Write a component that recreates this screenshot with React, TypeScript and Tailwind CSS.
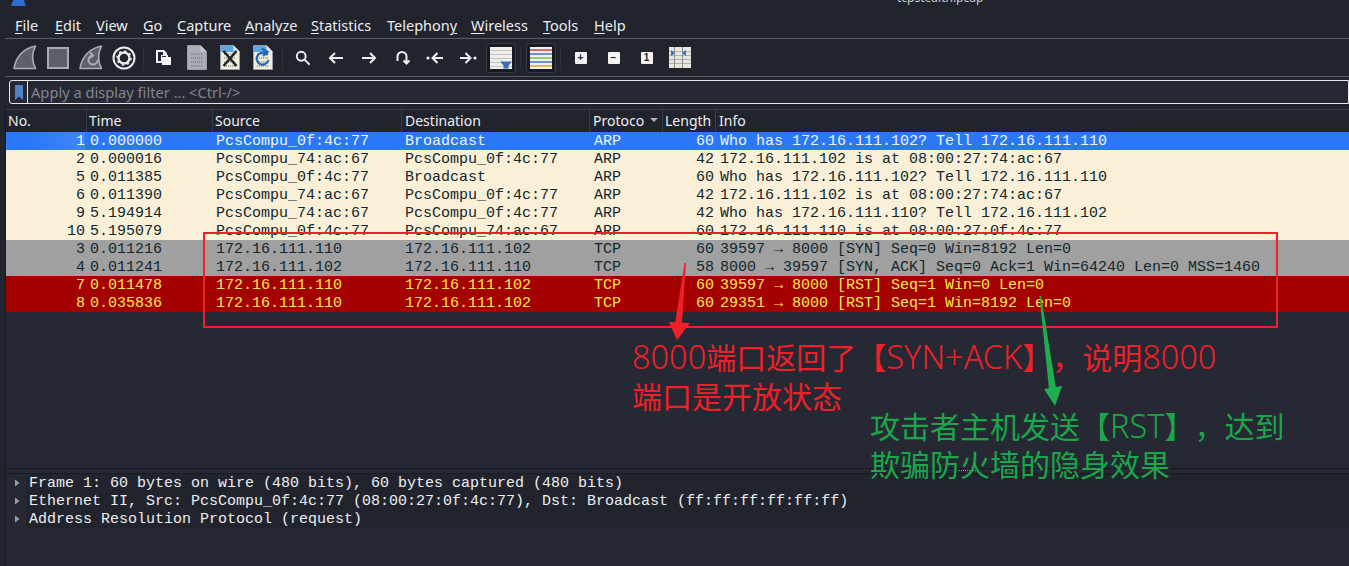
import { ReactNode } from "react";

const MONO = "font-['Liberation_Mono',monospace] text-[15px]";
const NOTE = "absolute text-[30px] font-['Noto_Sans_CJK_SC',sans-serif] whitespace-pre [text-spacing-trim:space-all]";

type Packet = { no: number; time: string; src: string; dst: string; proto: string; len: number; info: string; tone: string };

const ARP = "bg-[#faf0d7] text-[#12272e]";
const SYN = "bg-[#a0a0a0] text-[#12272e]";
const RST = "bg-[#a40000] text-[#fce94f]";

const packets: Packet[] = [
  { no: 1, time: "0.000000", src: "PcsCompu_0f:4c:77", dst: "Broadcast", proto: "ARP", len: 60, info: "Who has 172.16.111.102? Tell 172.16.111.110", tone: "bg-[#2a78f5] text-[#eef4ff]" },
  { no: 2, time: "0.000016", src: "PcsCompu_74:ac:67", dst: "PcsCompu_0f:4c:77", proto: "ARP", len: 42, info: "172.16.111.102 is at 08:00:27:74:ac:67", tone: ARP },
  { no: 5, time: "0.011385", src: "PcsCompu_0f:4c:77", dst: "Broadcast", proto: "ARP", len: 60, info: "Who has 172.16.111.102? Tell 172.16.111.110", tone: ARP },
  { no: 6, time: "0.011390", src: "PcsCompu_74:ac:67", dst: "PcsCompu_0f:4c:77", proto: "ARP", len: 42, info: "172.16.111.102 is at 08:00:27:74:ac:67", tone: ARP },
  { no: 9, time: "5.194914", src: "PcsCompu_74:ac:67", dst: "PcsCompu_0f:4c:77", proto: "ARP", len: 42, info: "Who has 172.16.111.110? Tell 172.16.111.102", tone: ARP },
  { no: 10, time: "5.195079", src: "PcsCompu_0f:4c:77", dst: "PcsCompu_74:ac:67", proto: "ARP", len: 60, info: "172.16.111.110 is at 08:00:27:0f:4c:77", tone: ARP },
  { no: 3, time: "0.011216", src: "172.16.111.110", dst: "172.16.111.102", proto: "TCP", len: 60, info: "39597 → 8000 [SYN] Seq=0 Win=8192 Len=0", tone: SYN },
  { no: 4, time: "0.011241", src: "172.16.111.102", dst: "172.16.111.110", proto: "TCP", len: 58, info: "8000 → 39597 [SYN, ACK] Seq=0 Ack=1 Win=64240 Len=0 MSS=1460", tone: SYN },
  { no: 7, time: "0.011478", src: "172.16.111.110", dst: "172.16.111.102", proto: "TCP", len: 60, info: "39597 → 8000 [RST] Seq=1 Win=0 Len=0", tone: RST },
  { no: 8, time: "0.035836", src: "172.16.111.110", dst: "172.16.111.102", proto: "TCP", len: 60, info: "29351 → 8000 [RST] Seq=1 Win=8192 Len=0", tone: RST },
];

const details = [
  "Frame 1: 60 bytes on wire (480 bits), 60 bytes captured (480 bits)",
  "Ethernet II, Src: PcsCompu_0f:4c:77 (08:00:27:0f:4c:77), Dst: Broadcast (ff:ff:ff:ff:ff:ff)",
  "Address Resolution Protocol (request)",
];

const menu: { pre: string; key: string; post: string; w: string }[] = [
  { pre: "", key: "F", post: "ile", w: "w-[40px]" },
  { pre: "", key: "E", post: "dit", w: "w-[41px]" },
  { pre: "", key: "V", post: "iew", w: "w-[47px]" },
  { pre: "", key: "G", post: "o", w: "w-[34px]" },
  { pre: "", key: "C", post: "apture", w: "w-[68px]" },
  { pre: "", key: "A", post: "nalyze", w: "w-[66px]" },
  { pre: "", key: "S", post: "tatistics", w: "w-[76px]" },
  { pre: "Telephon", key: "y", post: "", w: "w-[84px]" },
  { pre: "", key: "W", post: "ireless", w: "w-[72px]" },
  { pre: "", key: "T", post: "ools", w: "w-[51px]" },
  { pre: "", key: "H", post: "elp", w: "w-[40px]" },
];

const Shark = ({ reload }: { reload?: boolean }) => (
  <svg width="24" height="25" viewBox="0 0 24 25">
    <path d="M1 23.5 C3 12 9 4 22.5 1 C19 8 18.5 16 22.5 23.5 Z" fill="#5d6068" stroke="#a8abb3" strokeWidth="1.6" strokeLinejoin="round" />
    {reload && <path d="M18.5 15 a4.5 4.5 0 1 1 -4.5 -4.5 M11 7.5l3 3-3 2.5" fill="none" stroke="#a8abb3" strokeWidth="2" />}
  </svg>
);

const Stop = () => <div className="w-[22px] h-[22px] bg-[#5d6068] border-2 border-[#a8abb3]" />;

const Gear = () => (
  <svg width="24" height="24" viewBox="0 0 24 24">
    <circle cx="12" cy="12" r="10.5" fill="none" stroke="#ececec" strokeWidth="2" />
    <circle cx="12" cy="12" r="5.5" fill="none" stroke="#ececec" strokeWidth="2.4" />
    <circle cx="12" cy="12" r="7" fill="none" stroke="#ececec" strokeWidth="1.6" strokeDasharray="2.2 3.3" />
  </svg>
);

const OpenFile = () => (
  <svg width="15" height="15" viewBox="0 0 15 15">
    <path d="M0 0h8l3 3v3H6v7H0z" fill="#f4f4f4" />
    <path d="M2 2h5v3H5v6H2z" fill="#21242c" />
    <path d="M6 7h4V5h2v2h3v8H6z" fill="#f4f4f4" />
  </svg>
);

const FileDoc = ({ mode }: { mode: "plain" | "close" | "reload" }) => {
  const body = mode === "plain" ? "#a9adb5" : "#f1efdc";
  const mark = mode === "plain" ? "#7d818a" : "#9a9c90";
  return (
    <svg width="20" height="25" viewBox="0 0 20 25">
      <path d="M0.5 0.5h13l6 6v18h-19z" fill={body} stroke="#9a9da3" />
      {mode !== "plain" && <path d="M1 1h12l3 3v3H1z" fill="#5aa9e6" />}
      {mode !== "plain" && <path d="M13.5 0.5v6h6z" fill="#dfe6ea" />}
      {mode === "plain" && <path d="M13.5 0.5v6h6z" fill="#c4c7cd" />}
      <path d="M4 9h12M4 13h12M4 17h12M4 21h12" stroke={mark} strokeWidth="1.6" strokeDasharray="1.2 0.8" />
      {mode === "close" && <path d="M3.5 6l13 15M16.5 6l-13 15" stroke="#22252a" strokeWidth="2.6" />}
      {mode === "reload" && <path d="M14.5 10a6 6 0 1 0 1 5M9 3.5l5.5 3.5-4.5 4" fill="none" stroke="#2467b3" strokeWidth="2.2" />}
    </svg>
  );
};

const Stroke = ({ d }: { d: string }) => (
  <svg width="18" height="18" viewBox="0 0 18 18" fill="none" stroke="#f0f0f0" strokeWidth="2">
    <path d={d} />
  </svg>
);

const Search = () => (
  <svg width="16" height="16" viewBox="0 0 18 18" fill="none" stroke="#f0f0f0" strokeWidth="2.2">
    <circle cx="7" cy="7" r="5" />
    <path d="M10.5 10.5L16.5 16.5" />
  </svg>
);

const Dotted = ({ flip }: { flip?: boolean }) => (
  <svg width="18" height="18" viewBox="0 0 18 18" fill="none" stroke="#f0f0f0" strokeWidth="2" className={flip ? "-scale-x-100" : ""}>
    <circle cx="2" cy="9" r="1.6" fill="#f0f0f0" stroke="none" />
    <path d="M17 9H7M11.5 4L6.5 9l5 5" />
  </svg>
);

const Autoscroll = () => (
  <svg width="22" height="22" viewBox="0 0 22 22">
    <rect width="22" height="22" fill="#efefe9" />
    <path d="M0 3.5h22M0 7.5h22M0 11.5h22M0 15.5h22M0 19.5h22" stroke="#c4c4bf" />
    <path d="M10 14.5h12l-3.5 4v3h-5v-3z" fill="#3b6fb5" />
  </svg>
);

const Colorize = () => (
  <svg width="22" height="22" viewBox="0 0 22 22">
    <rect width="22" height="22" fill="#f2f2ec" />
    <path d="M0 3h22" stroke="#e02f2f" strokeWidth="1.4" />
    <path d="M0 7h22" stroke="#3f5fd0" strokeWidth="1.4" />
    <path d="M0 11h22" stroke="#6fbf3a" strokeWidth="1.4" />
    <path d="M0 15h22" stroke="#2a68d8" strokeWidth="1.4" />
    <path d="M0 19h22" stroke="#d8a818" strokeWidth="1.4" />
  </svg>
);

const Zoomer = ({ children }: { children: ReactNode }) => (
  <div className="w-[12px] h-[12px] bg-[#f2f2f2] rounded-[1px] text-[#21242c] font-['Liberation_Sans',sans-serif] font-bold text-[10px] leading-[12px] text-center">
    {children}
  </div>
);

const ResizeCols = () => (
  <svg width="22" height="21" viewBox="0 0 22 21">
    <rect width="22" height="21" fill="#e6e6e0" />
    <path d="M0 4.5h22M0 8.5h22M0 12.5h22M0 16.5h22" stroke="#b5b5b0" />
    <path d="M5.5 0v21M13.5 0v21" stroke="#8d8d88" />
    <path d="M2 3l4 3-4 3zM17 3l-4 3 4 3z" fill="#3b6fb5" />
  </svg>
);

const Btn = ({ children, boxed }: { children: ReactNode; boxed?: boolean }) => (
  <div className="w-[33px] h-[37px] flex items-center justify-center shrink-0">
    {boxed ? (
      <div className="w-[30px] h-[30px] bg-[#191b22] border border-[#383b45] rounded-[3px] flex items-center justify-center">{children}</div>
    ) : children}
  </div>
);

const Sep = () => (
  <div className="w-[7px] h-[37px] flex items-center justify-center shrink-0">
    <div className="w-[1px] h-[24px] bg-[#2e313b]" />
  </div>
);

const HeaderCell = ({ label, box, sort }: { label: string; box: string; sort?: boolean }) => (
  <div className={`${box} h-full shrink-0 border-r border-[#3a3d48] pb-[2px] flex items-center relative`}>
    <span>{label}</span>
    {sort && <div className="absolute right-[4px] top-[8px] w-[8px] h-[4px] bg-[#b0b2b8] [clip-path:polygon(0_0,100%_0,50%_100%)]" />}
  </div>
);

const PacketRow = ({ p }: { p: Packet }) => (
  <div className={`flex h-[18px] leading-[20px] whitespace-pre ${p.tone}`}>
    <div className={`w-[79px] text-right ${p.no === 1 ? "bg-linear-to-r from-[#2a78f5] from-30% to-[#3d86f6]" : ""}`}>{p.no}</div>
    <div className="w-[5px]" />
    <div className="w-[126px]">{p.time}</div>
    <div className="w-[189px]">{p.src}</div>
    <div className="w-[189px]">{p.dst}</div>
    <div className="w-[72px]">{p.proto}</div>
    <div className="w-[48px] text-right">{p.len}</div>
    <div className="w-[6px]" />
    <div className="flex-1">{p.info}</div>
  </div>
);

// latin runs in the annotations are set bigger and lighter than the chinese
const Latin = ({ children }: { children: ReactNode }) => (
  <span className="font-['Noto_Sans',sans-serif] font-light text-[32.5px]">{children}</span>
);

export default function App() {
  return (
    <div className="relative w-[1349px] h-[566px] overflow-hidden bg-[#21242c] flex flex-col text-[#eceef2] font-['Noto_Sans',sans-serif]">
      {/* clipped title bar */}
      <div className="h-[14px] overflow-hidden relative shrink-0">
        <div className="absolute left-[11px] -top-[4px] w-[15px] h-[10px] bg-[#2f6fd0] [clip-path:polygon(25%_0,75%_0,100%_100%,0_100%)]" />
        <div className="absolute left-[897px] -top-[11px] text-[12px] leading-[17px] text-[#c8cad0]">tcpstealth.pcap</div>
      </div>

      <div className="h-[24px] pl-[15px] flex items-center text-[14.5px] shrink-0">
        {menu.map((m) => (
          <div key={m.pre + m.key + m.post} className={`${m.w} shrink-0`}>
            {m.pre}<span className="underline underline-offset-2">{m.key}</span>{m.post}
          </div>
        ))}
      </div>

      <div className="ml-[5px] h-[1px] bg-[#5a5d66] shrink-0" />

      <div className="h-[37px] pl-[8px] flex items-center shrink-0">
        <Btn><Shark /></Btn>
        <Btn><Stop /></Btn>
        <Btn><Shark reload /></Btn>
        <Btn><Gear /></Btn>
        <Sep />
        <Btn><OpenFile /></Btn>
        <Btn><FileDoc mode="plain" /></Btn>
        <Btn><FileDoc mode="close" /></Btn>
        <Btn><FileDoc mode="reload" /></Btn>
        <Sep />
        <Btn><Search /></Btn>
        <Btn><Stroke d="M16 9H3M8 4L3 9l5 5" /></Btn>
        <Btn><Stroke d="M2 9h13M10 4l5 5-5 5" /></Btn>
        <Btn><Stroke d="M4.5 12V7.5a4.5 4.5 0 0 1 9 0V14M10.5 11.5l3 3 3-3" /></Btn>
        <Btn><Dotted /></Btn>
        <Btn><Dotted flip /></Btn>
        <Btn boxed><Autoscroll /></Btn>
        <Sep />
        <Btn boxed><Colorize /></Btn>
        <Sep />
        <Btn><Zoomer>+</Zoomer></Btn>
        <Btn><Zoomer>−</Zoomer></Btn>
        <Btn><Zoomer>1</Zoomer></Btn>
        <Btn><ResizeCols /></Btn>
      </div>

      <div className="ml-[5px] h-[1px] bg-[#5a5d66] shrink-0" />

      <div className="mt-[3px] ml-[9px] h-[24px] border border-[#e8e8e8] rounded-l-[3px] bg-[#262934] flex items-center shrink-0">
        <div className="w-[18px] h-full border-r border-[#e8e8e8] flex items-center justify-center">
          <svg width="8" height="15" viewBox="0 0 8 15">
            <path d="M0 0h8v15L4 11.5 0 15z" fill="#4f83c4" />
          </svg>
        </div>
        <div className="pl-[3px] text-[14.67px] text-[#82858d]">Apply a display filter … &lt;Ctrl-/&gt;</div>
      </div>

      <div className="flex-1 ml-[5px] mt-[5px] bg-[#262934] flex flex-col min-h-0 border-l border-[#16181e]">
        <div className="h-[23px] flex items-center text-[14px] bg-[#21242c] border-t border-[#3a3d48] shrink-0">
          <HeaderCell label="No." box="w-[81px] pl-[2px]" />
          <HeaderCell label="Time" box="w-[126px] pl-[2px]" />
          <HeaderCell label="Source" box="w-[189px] pl-[2px]" />
          <HeaderCell label="Destination" box="w-[188px] pl-[3px]" />
          <HeaderCell label="Protoco" box="w-[73px] pl-[3px]" sort />
          <HeaderCell label="Length" box="w-[53px] pl-[2px]" />
          <div className="pl-[3px] pb-[2px]">Info</div>
        </div>

        <div className={`h-[336px] shrink-0 ${MONO}`}>
          {packets.map((p) => <PacketRow key={p.no} p={p} />)}
        </div>

        <div className="h-[6px] border-y border-[#191b21] shrink-0 flex justify-center pl-[580px]">
          <div className="w-[17px] h-[1px] mt-[1px] border-t border-dotted border-[#8a8d95]" />
        </div>

        <div className={`${MONO} shrink-0`}>
          {details.map((line) => (
            <div key={line} className="flex h-[18px] leading-[20px] whitespace-pre">
              <div className="w-[20px] flex items-center justify-center">
                <div className="ml-[2px] w-[5px] h-[8px] bg-[#9a9da3] [clip-path:polygon(0_0,100%_50%,0_100%)]" />
              </div>
              <div className="flex-1 bg-[#21242c] pl-[3px]">{line}</div>
            </div>
          ))}
        </div>
      </div>

      {/* annotations drawn over the capture */}
      <div className="absolute left-[203px] top-[232px] w-[1075px] h-[96px] border-2 border-[#ee2028]" />
      <svg className="absolute inset-0" width="1349" height="566" viewBox="0 0 1349 566">
        <path d="M684.5 263L686 263L682 324L675 324Z" fill="#ee2028" />
        <path d="M669 322L690 323L677 340Z" fill="#ee2028" />
        <path d="M1039.5 296L1041 296L1056 388L1049 389Z" fill="#1fae4c" />
        <path d="M1044 389L1062 386L1055 406Z" fill="#1fae4c" />
      </svg>
      <div className={`${NOTE} left-[632px] top-[337px] text-[#ee2028]`}>
        <div className="h-[39px] leading-[39px]"><Latin>8000</Latin>端口返回了【<Latin>SYN+ACK</Latin>】，说明<Latin>8000</Latin></div>
        <div className="h-[39px] leading-[39px]">端口是开放状态</div>
      </div>
      <div className={`${NOTE} left-[870px] top-[406px] text-[#1aa64a]`}>
        <div className="h-[38px] leading-[38px]">攻击者主机发送【<Latin>RST</Latin>】，达到</div>
        <div className="h-[38px] leading-[38px]">欺骗防火墙的隐身效果</div>
      </div>
    </div>
  );
}
